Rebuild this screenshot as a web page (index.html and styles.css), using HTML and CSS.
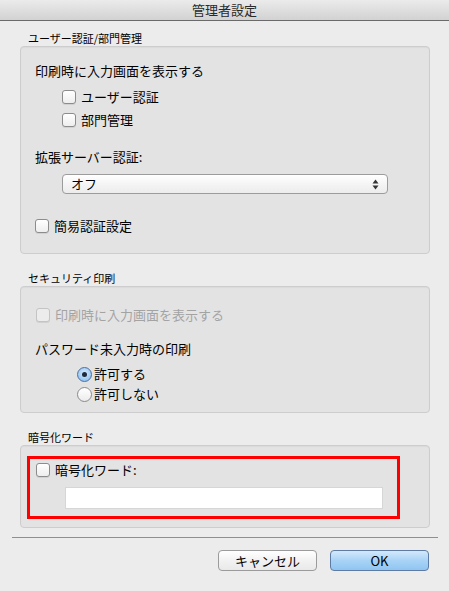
FILE: index.html
```html
<!DOCTYPE html>
<html lang="ja">
  <head>
    <meta charset="UTF-8" />
    <meta name="viewport" content="width=device-width, initial-scale=1.0" />
    <title>管理者設定</title>
    <link rel="stylesheet" href="styles.css">
  </head>
  <body>
    <div class="window">
      <div class="titlebar">管理者設定</div>

      <div class="content">
        <div class="group-title first">ユーザー認証/部門管理</div>
        <div class="box box-auth">
          <div class="row heading">印刷時に入力画面を表示する</div>
          <label class="row check indent first-check"><span class="checkbox"></span>ユーザー認証</label>
          <label class="row check indent second-check"><span class="checkbox"></span>部門管理</label>
          <div class="row heading ext-label">拡張サーバー認証:</div>
          <div class="select">
            <span>オフ</span>
            <svg class="stepper" width="7" height="11" viewBox="0 0 7 11">
              <path d="M3.5 0.5 L6.5 4.5 L0.5 4.5 Z" fill="#333" />
              <path d="M3.5 10.5 L6.5 6.5 L0.5 6.5 Z" fill="#333" />
            </svg>
          </div>
          <label class="row check simple-check"><span class="checkbox"></span>簡易認証設定</label>
        </div>

        <div class="group-title">セキュリティ印刷</div>
        <div class="box box-secure">
          <label class="row check disabled secure-check"><span class="checkbox"></span>印刷時に入力画面を表示する</label>
          <div class="row heading pw-label">パスワード未入力時の印刷</div>
          <label class="row radio-row radio-first"><span class="radio on"></span>許可する</label>
          <label class="row radio-row radio-second"><span class="radio"></span>許可しない</label>
        </div>

        <div class="group-title">暗号化ワード</div>
        <div class="box box-word">
          <div class="highlight">
            <label class="row check word-check"><span class="checkbox"></span>暗号化ワード:</label>
            <div class="textfield"></div>
          </div>
        </div>
      </div>

      <div class="separator"></div>

      <div class="buttons">
        <button class="btn">キャンセル</button>
        <button class="btn btn-default">OK</button>
      </div>
    </div>
  </body>
</html>
```

FILE: styles.css
```css
body {
  margin: 0;
  font-family: "Noto Sans CJK JP", "Liberation Sans", sans-serif;
  font-size: 13px;
  color: #000;
  background-color: #ececec;
}
.window {
  width: 449px;
  height: 591px;
  background-color: #ececec;
  overflow: hidden;
}
.titlebar {
  height: 20px;
  line-height: 20px;
  text-align: center;
  font-size: 13px;
  color: #2a2a2a;
  background: linear-gradient(#ebebeb, #d2d2d2);
  border-bottom: 1px solid #6a6a6a;
}
.content {
  padding: 0 19px 0 20px;
}
.group-title {
  font-size: 11px;
  line-height: 14px;
  height: 14px;
  margin: 17px 0 1px 8px;
}
.group-title.first {
  margin-top: 10px;
}
.box {
  background-color: #e3e3e3;
  border: 1px solid #cdcdcd;
  border-radius: 4px;
  box-shadow: inset 0 1px 1px rgba(0, 0, 0, 0.04);
}
.box-auth {
  padding: 15px 0 18px 14px;
}
.box-secure {
  padding: 19px 0 9px 14px;
}
.box-word {
  padding: 10px 0 8px 6px;
}
.row {
  display: flex;
  align-items: center;
  height: 18px;
  line-height: 18px;
  white-space: nowrap;
}
.indent {
  margin-left: 27px;
}
.first-check {
  margin-top: 8px;
}
.second-check {
  margin-top: 5px;
}
.ext-label {
  margin-top: 19px;
}
.simple-check {
  margin-top: 23px;
}
.secure-check {
  margin-left: 1px;
}
.pw-label {
  margin-top: 16px;
}
.radio-first {
  margin-top: 7px;
  margin-left: 42px;
}
.radio-second {
  margin-top: 2px;
  margin-left: 42px;
}
.checkbox {
  width: 12px;
  height: 12px;
  border: 1px solid #8c8c8c;
  border-radius: 3px;
  background: linear-gradient(#ffffff, #eeeeee);
  box-shadow: 0 1px 0 rgba(0, 0, 0, 0.08);
  margin-right: 5px;
  flex: none;
}
.check.disabled {
  color: #a3a3a3;
}
.check.disabled .checkbox {
  border-color: #c4c4c4;
  background: #ececec;
}
.radio {
  width: 13px;
  height: 13px;
  border: 1px solid #8a8a8a;
  border-radius: 50%;
  background: linear-gradient(#ffffff, #ececec);
  margin-right: 2px;
  flex: none;
  display: flex;
  align-items: center;
  justify-content: center;
}
.radio.on {
  border-color: #4f6f9c;
  background: radial-gradient(circle at 50% 40%, #d9ecfc, #7db7ef);
}
.radio.on::after {
  content: "";
  width: 5px;
  height: 5px;
  border-radius: 50%;
  background: #1e2a3a;
}
.select {
  margin: 8px 0 0 27px;
  width: 324px;
  height: 18px;
  border: 1px solid #9c9c9c;
  border-radius: 4px;
  background: linear-gradient(#ffffff, #f4f4f4 55%, #ececec);
  display: flex;
  align-items: center;
  justify-content: space-between;
  padding: 0 8px 0 8px;
  box-sizing: content-box;
  width: 308px;
}
.select span {
  line-height: 18px;
}
.highlight {
  width: 367px;
  border: 3px solid #ff0000;
  padding: 2px 0 7px 6px;
  box-sizing: content-box;
  width: 361px;
}
.word-check {
  margin-left: 0;
}
.textfield {
  margin: 8px 0 0 29px;
  width: 316px;
  height: 20px;
  background: #fff;
  border: 1px solid #d6d6d6;
}
.separator {
  margin: 9px 11px 0 12px;
  height: 1px;
  background-color: #8f8f8f;
}
.buttons {
  display: flex;
  justify-content: flex-end;
  gap: 13px;
  padding: 12px 20px 0 0;
}
.btn {
  width: 99px;
  height: 21px;
  padding: 0;
  font-family: "Noto Sans CJK JP", "Liberation Sans", sans-serif;
  font-size: 13px;
  color: #000;
  border: 1px solid #9b9b9b;
  border-radius: 4px;
  background: linear-gradient(#ffffff, #f2f2f2 50%, #e9e9e9);
  line-height: 19px;
}
.btn-default {
  border-color: #5d7ba3;
  background: linear-gradient(#d3e9fc, #a9d3f6 50%, #8fc5f2);
}
```
